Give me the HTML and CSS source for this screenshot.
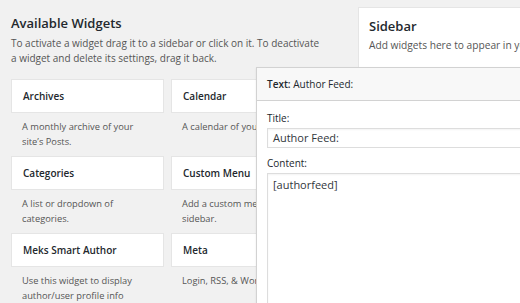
FILE: index.html
```html
<!DOCTYPE html>
<html>
<head>
<meta charset="utf-8">
<link rel="stylesheet" href="styles.css">
</head>
<body>
<div class="page">
  <div class="available">
    <h2 class="heading">Available Widgets</h2>
    <p class="intro">To activate a widget drag it to a sidebar or click on it. To deactivate a widget and delete its settings, drag it back.</p>
    <div class="widget-grid">
      <div class="widget">
        <div class="widget-top">Archives</div>
        <div class="widget-desc">A monthly archive of your site’s Posts.</div>
      </div>
      <div class="widget">
        <div class="widget-top">Calendar</div>
        <div class="widget-desc">A calendar of your site’s Posts.</div>
      </div>
      <div class="widget">
        <div class="widget-top">Categories</div>
        <div class="widget-desc">A list or dropdown of categories.</div>
      </div>
      <div class="widget">
        <div class="widget-top">Custom Menu</div>
        <div class="widget-desc">Add a custom menu to your sidebar.</div>
      </div>
      <div class="widget">
        <div class="widget-top">Meks Smart Author</div>
        <div class="widget-desc">Use this widget to display author/user profile info</div>
      </div>
      <div class="widget">
        <div class="widget-top">Meta</div>
        <div class="widget-desc">Login, RSS, &amp; WordPress.org links.</div>
      </div>
    </div>
  </div>
  <div class="sidebar">
    <h2 class="sidebar-name">Sidebar</h2>
    <p class="sidebar-desc">Add widgets here to appear in your sidebar.</p>
  </div>
</div>

<div class="drag-panel">
  <div class="panel-head"><b>Text:</b> Author Feed:</div>
  <div class="panel-body">
    <label class="field-label">Title:</label>
    <div class="text-input">Author Feed:</div>
    <label class="field-label content-label">Content:</label>
    <div class="text-area">[authorfeed]</div>
  </div>
</div>
</body>
</html>
```
FILE: styles.css
```css
html, body {
  margin: 0;
  padding: 0;
  height: 303px;
  overflow: hidden;
}
body {
  background: #f1f1f1;
  font-family: "Open Sans", "Noto Sans", sans-serif;
  color: #23282d;
  position: relative;
}
.page {
  display: flex;
  align-items: flex-start;
}
.available {
  width: 347px;
  flex: none;
  padding: 14px 0 0 11px;
}
.heading {
  margin: 0;
  font-size: 13px;
  font-weight: 600;
  line-height: 18px;
}
.intro {
  margin: 4px 0 0;
  font-size: 10px;
  line-height: 15px;
  color: #555;
  width: 312px;
}
.widget-grid {
  margin-top: 13px;
  display: grid;
  grid-template-columns: 153px 153px;
  column-gap: 7px;
  row-gap: 7px;
}
.widget-top {
  background: #fff;
  border: 1px solid #e5e5e5;
  height: 32px;
  line-height: 32px;
  padding: 0 11px;
  font-size: 10px;
  font-weight: 600;
  color: #23282d;
  white-space: nowrap;
}
.widget-desc {
  margin-top: 6px;
  padding: 0 0 0 11px;
  width: 125px;
  font-size: 9.3px;
  line-height: 15px;
  height: 30px;
  color: #555;
}
.widget-grid .widget:nth-child(even) .widget-desc {
  width: 150px;
}
.sidebar {
  flex: none;
  width: 200px;
  margin-top: 7px;
  background: #fff;
  border: 1px solid #e5e5e5;
  height: 120px;
  padding: 9px 10px 0;
}
.sidebar-name {
  margin: 0;
  font-size: 13px;
  font-weight: 600;
  line-height: 18px;
}
.sidebar-desc {
  margin: 3px 0 0;
  font-size: 10.2px;
  line-height: 15px;
  color: #555;
  white-space: nowrap;
}
.drag-panel {
  position: absolute;
  left: 256px;
  top: 67px;
  width: 300px;
  height: 260px;
  background: #fff;
  border: 1px solid #d2d2d2;
  box-shadow: 0 1px 2px rgba(0,0,0,0.08);
}
.panel-head {
  background: #f8f8f8;
  border-bottom: 1px solid #d2d2d2;
  height: 32px;
  line-height: 32px;
  padding: 0 10px;
  font-size: 10px;
  color: #23282d;
}
.panel-head b {
  font-weight: 600;
}
.panel-body {
  padding: 11px 0 0 10px;
}
.field-label {
  display: block;
  font-size: 10px;
  line-height: 13px;
  height: 13px;
  color: #23282d;
}
.text-input {
  margin-top: 3px;
  height: 18px;
  line-height: 18px;
  border: 1px solid #ddd;
  padding: 0 5px;
  font-size: 11px;
  color: #32373c;
  box-shadow: inset 0 1px 2px rgba(0,0,0,0.05);
}
.content-label {
  margin-top: 9px;
}
.text-area {
  margin-top: 3px;
  height: 200px;
  border: 1px solid #ddd;
  padding: 3px 5px;
  font-size: 11px;
  line-height: 16px;
  color: #32373c;
  box-shadow: inset 0 1px 2px rgba(0,0,0,0.05);
}
```
